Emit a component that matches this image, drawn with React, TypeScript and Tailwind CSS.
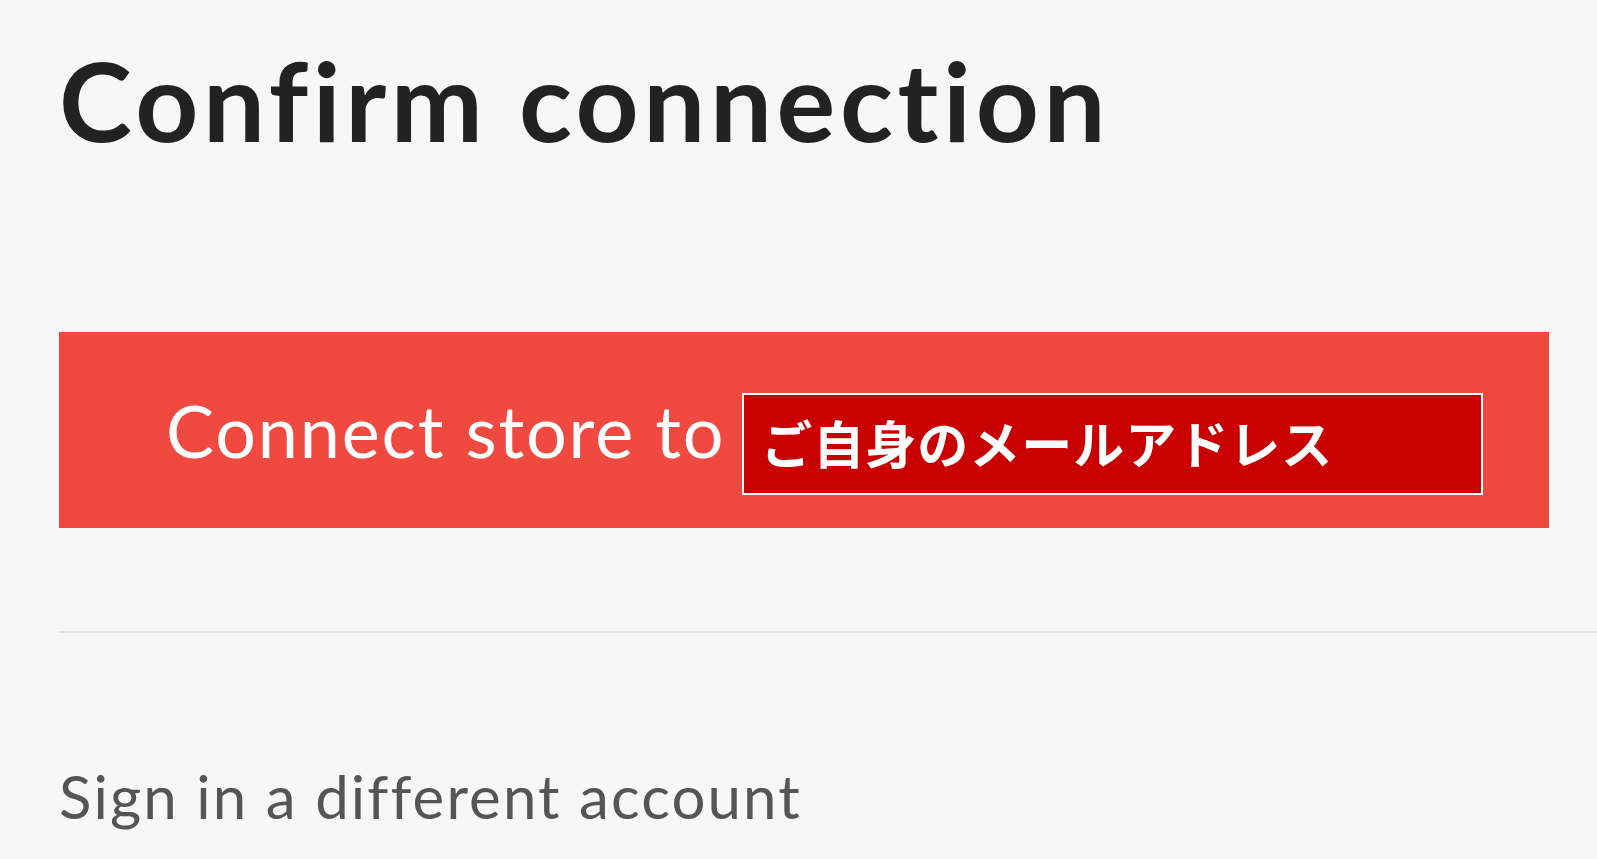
export default function App() {
  return (
    <div className="min-h-screen w-full bg-[#f7f7f7] pl-[59px] pt-[44px] font-['Lato','Liberation_Sans',sans-serif] [font-variant-ligatures:none]">
      <h1 className="text-[110px] font-bold leading-none tracking-[4.6px] text-[#222222]">Confirm connection</h1>

      <div className="mt-[178px] mr-[48px] flex h-[196px] items-center bg-[#f0493f] pl-[107px]">
        <span className="text-[72px] leading-none tracking-[1.8px] text-white">Connect store to</span>
        <div className="ml-[17px] mt-[28px] flex h-[102px] w-[741px] items-center border-2 border-white bg-[#c80000] pl-[17px]">
          <span className="mb-[4px] text-[51px] font-bold leading-none tracking-[1px] text-white font-['Noto_Sans_CJK_JP','Meiryo',sans-serif]">
            ご自身のメールアドレス
          </span>
        </div>
      </div>

      <div className="mt-[103px] h-[2px] bg-[#e3e3e3]" />

      <div className="mt-[133px]">
        <a className="text-[60px] leading-none tracking-[2.1px] text-[#555555]">Sign in a different account</a>
      </div>
    </div>
  );
}
